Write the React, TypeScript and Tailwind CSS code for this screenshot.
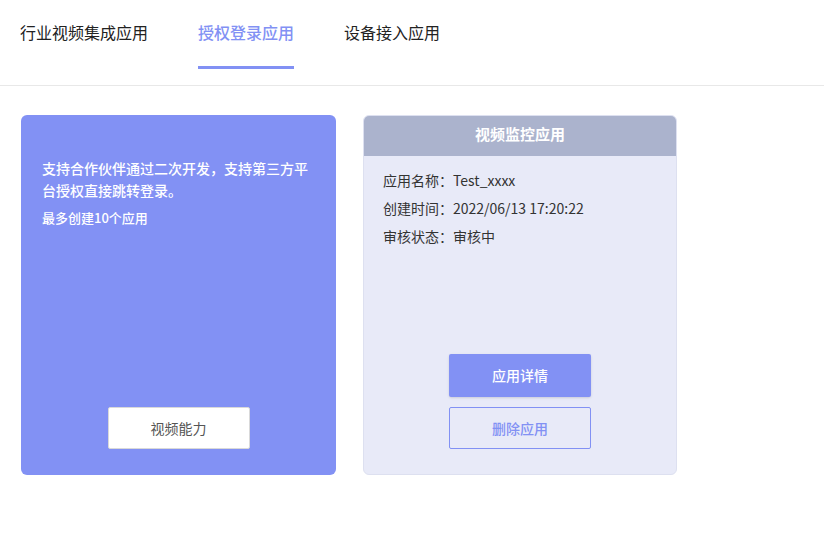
const font = { fontFamily: '"PingFang SC", "Noto Sans CJK SC", "Noto Sans", sans-serif' };

const tabs = ["行业视频集成应用", "授权登录应用", "设备接入应用"];

function Tabs() {
  return (
    <div className="flex h-[86px] border-b border-[#e8e8e8] pl-5">
      {tabs.map((t, i) => (
        <div key={t} className="mr-[50px] flex flex-col">
          <div
            className={
              "pt-[21px] text-[16px] leading-[22px] " +
              (i === 1 ? "font-medium text-[#8291f4]" : "text-[#222]")
            }
          >
            {t}
          </div>
          {i === 1 && <div className="mt-[23px] h-[3px] bg-[#8291f4]" />}
        </div>
      ))}
    </div>
  );
}

function IntroCard() {
  return (
    <div className="flex h-[360px] w-[315px] flex-col rounded-md bg-[#8291f4] px-[21px] text-white">
      <p className="pt-[42px] text-[14px] font-medium leading-[22px]">
        支持合作伙伴通过二次开发，支持第三方平台授权直接跳转登录。
      </p>
      <p className="mt-[6px] text-[13px] font-medium leading-[22px]">最多创建10个应用</p>
      <div className="mt-auto mb-[26px] flex justify-center">
        <button className="h-[42px] w-[142px] rounded-[2px] border border-[#d9d9d9] bg-white text-[14px] text-[#555]">
          视频能力
        </button>
      </div>
    </div>
  );
}

function AppCard() {
  const rows = [
    ["应用名称：", "Test_xxxx"],
    ["创建时间：", "2022/06/13 17:20:22"],
    ["审核状态：", "审核中"],
  ];
  return (
    <div className="flex h-[360px] w-[314px] flex-col overflow-hidden rounded-md border border-[#dde0f0] bg-[#e8eaf8]">
      <div className="flex h-[40px] items-center justify-center bg-[#abb3cd] pb-[3px] text-[15px] font-bold text-white">
        视频监控应用
      </div>
      <div className="px-[19px] pt-[10px] text-[14px] leading-[28px] text-[#333]">
        {rows.map(([k, v]) => (
          <div key={k}>
            {k}
            {v}
          </div>
        ))}
      </div>
      <div className="mt-auto mb-[25px] flex flex-col items-center gap-[10px]">
        <button className="h-[43px] w-[142px] rounded-[2px] bg-[#8291f4] text-[14px] font-medium text-white shadow-sm">
          应用详情
        </button>
        <button className="h-[42px] w-[142px] rounded-[2px] border border-[#8291f4] text-[14px] font-medium text-[#8291f4]">
          删除应用
        </button>
      </div>
    </div>
  );
}

export default function App() {
  return (
    <div className="h-[542px] w-[824px] bg-white" style={font}>
      <Tabs />
      <div className="flex gap-[27px] pl-[21px] pt-[29px]">
        <IntroCard />
        <AppCard />
      </div>
    </div>
  );
}
